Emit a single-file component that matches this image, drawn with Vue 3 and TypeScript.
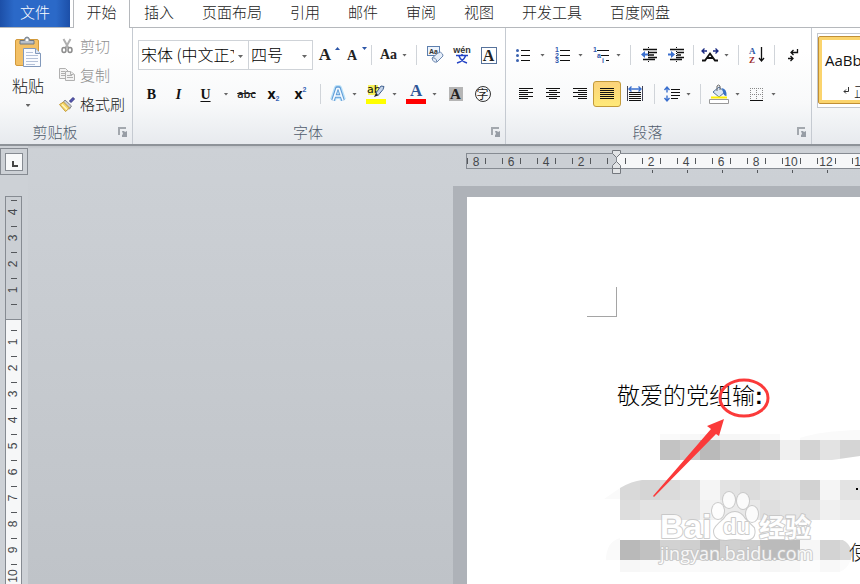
<script setup lang="ts">
import { ref } from 'vue'

const tabs = ['插入', '页面布局', '引用', '邮件', '审阅', '视图', '开发工具', '百度网盘']
const fontName = ref('宋体 (中文正文)')
const fontSize = ref('四号')

interface Mark { pos: number; label: string }

const hUnit = 35
const hOrigin = 150
const hMarks: Mark[] = []
for (let i = -4; i <= 12; i++) {
  if (i !== 0) hMarks.push({ pos: hOrigin + i * hUnit, label: String(Math.abs(i * 2)) })
}
const hTicks: number[] = []
for (let i = -9; i <= 24; i++) hTicks.push(Math.round(hOrigin + 8.75 + i * 17.5))

const vUnit = 26
const vOrigin = 120
const vMarks: Mark[] = []
for (let i = -4; i <= 16; i++) {
  if (i !== 0) vMarks.push({ pos: vOrigin + i * vUnit, label: String(Math.abs(i)) })
}
const vTicks: number[] = []
for (let i = -4; i <= 16; i++) vTicks.push(vOrigin + 14 + i * vUnit)

interface Tile { x: number; y: number; h: number; shade: string }
function row(x: number, y: number, h: number, shades: string): Tile[] {
  return shades.split(' ').map((s, i) => ({ x: x + i * 20, y, h, shade: `#${s}${s}${s}` }))
}
const tiles: Tile[] = [
  ...row(193, 237, 6, 'fa f8 f3 f6 f7 f9'),
  ...row(193, 243, 20, 'c3 cb ba c6 c6 cd f0 d3 e3 d5'),
  ...row(153, 283, 20, 'd9 d5 db e0 f5 e3 dc e3 e5 d2 f5 e3'),
  ...row(153, 303, 20, 'dd e3 e3 e3 f2 eb e8 df e5 e2 f0 eb'),
  ...row(153, 343, 20, 'b9 c1 d2 cf bc d0 cc bb ba f7 d3 da'),
  ...row(153, 363, 12, 'f7 f9 fa fa f9 f8 fa f6 f8 fc f8 fb'),
]
</script>

<template>
  <div class="app">
    <nav class="tabs">
      <button class="tab file">文件</button>
      <button class="tab active">开始</button>
      <button v-for="t in tabs" :key="t" class="tab">{{ t }}</button>
    </nav>

    <header class="ribbon">
      <section class="group clipboard">
        <div class="clip-body">
          <button class="paste">
            <svg width="28" height="32" viewBox="0 0 28 32">
              <rect x="1.5" y="3.5" width="23" height="26" rx="1.5" fill="#f3c065" stroke="#d29a3c" />
              <path d="M6 8V4.500h4.500Q10.500 1 13 1t2.500 3.500H20V8z" fill="#b9c0c9" stroke="#6f7883" />
              <circle cx="13" cy="4" r="1.3" fill="#fff" />
              <path d="M9.500 12.500h12l5 5v13h-17z" fill="#fafcff" stroke="#8299bb" />
              <path d="M21.500 12.500v5h5" fill="#dbe5f4" stroke="#8299bb" />
              <path d="M12 16.500h7M12 19.500h12M12 22.500h12M12 25.500h12M12 28.500h9" stroke="#b4c1d8" />
            </svg>
            <span>粘贴</span>
            <i class="caret" />
          </button>
          <div class="clip-list">
            <button class="clip-item off">
              <svg width="16" height="16" viewBox="0 0 16 16" fill="none">
                <path d="M4.500 1l5 9M11.500 1l-5 9" stroke="#b0b0b0" stroke-width="2" />
                <ellipse cx="5" cy="12" rx="2" ry="2.5" stroke="#8d8d8d" stroke-width="1.5" />
                <ellipse cx="11" cy="12" rx="2" ry="2.5" stroke="#8d8d8d" stroke-width="1.5" />
              </svg>剪切
            </button>
            <button class="clip-item off">
              <svg width="16" height="16" viewBox="0 0 16 16" fill="#f3f3f3" stroke="#b0b0b0">
                <path d="M.5 1.500h6l3 3v7h-9z" /><path d="M2 4.500h4M2 6.500h4M2 8.500h4" />
                <path d="M6.500 4.500h5l4 3v6h-9z" /><path d="M8 8.500h5M8 10.500h6M11.500 4.500v3h3" />
              </svg>复制
            </button>
            <button class="clip-item">
              <svg width="16" height="16" viewBox="0 0 16 16">
                <path d="M10.500 5L14 1.500l1.500 1.500L12 6.500z" fill="#5557b5" stroke="#34357f" />
                <path d="M6 4l6.500 6-2 3-7-6z" fill="#c9ccd2" stroke="#83878e" />
                <path d="M4.500 6l6 6-4 3.500L.5 8.500z" fill="#f5d766" stroke="#c39b3c" />
                <path d="M3 8.500l5 5" stroke="#fff6c4" stroke-width="1.5" />
              </svg>格式刷
            </button>
          </div>
        </div>
        <footer class="caption"><span>剪贴板</span>
          <button class="launch" aria-label="剪贴板"><svg width="10" height="10" viewBox="0 0 10 10"><path d="M1 8V1h7" fill="none" stroke="#a3a8ae" stroke-width="2" /><path d="M4 4h2l1 1 2-1v6H4V8l1-1z" fill="#979da5" /></svg></button>
        </footer>
      </section>

      <section class="group font">
        <div class="tools first">
          <div class="combo name">
            <select v-model="fontName" aria-label="字体"><option>宋体 (中文正文)</option></select><i class="caret" />
          </div>
          <div class="combo size">
            <select v-model="fontSize" aria-label="字号"><option>四号</option></select><i class="caret" />
          </div>
          <button class="tool serif grow">A<svg class="mark" width="5" height="3"><path d="M0 3L2.500 0 5 3z" fill="#2d56a8" /></svg></button>
          <button class="tool serif shrink">A<svg class="mark" width="5" height="3"><path d="M0 0h5L2.500 3z" fill="#2d56a8" /></svg></button>
          <i class="sep" />
          <button class="split serif aa"><span class="w16">Aa</span><i class="caret" /></button>
          <i class="sep" />
          <button class="tool" aria-label="清除格式">
            <svg width="18" height="18" viewBox="0 0 18 18">
              <rect x="1.5" y=".5" width="12" height="9" fill="#eef4fc" stroke="#5d7fae" />
              <text x="3" y="8" class="tiny">Aa</text>
              <path d="M6 12l6-5q3-2 4.500 1l.5 2-6 6q-4 1-5-4z" fill="#e6eef9" stroke="#6d88b0" />
              <path d="M6 12q4-1 5 4" fill="none" stroke="#6d88b0" />
            </svg>
          </button>
          <button class="tool" aria-label="拼音指南">
            <svg width="18" height="18" viewBox="0 0 18 18">
              <text x="9" y="7" class="wen">wén</text>
              <path d="M3 9.500h12M9 8v2M6 10q2 5 8 7M12.500 10q-2 5-8.500 7" fill="none" stroke="#2443c4" stroke-width="1.5" />
            </svg>
          </button>
          <button class="tool" aria-label="字符边框"><span class="boxed serif">A</span></button>
        </div>
        <div class="tools">
          <button class="tool serif b">B</button>
          <button class="tool serif it">I</button>
          <button class="tool serif un">U</button>
          <button class="drop" aria-label="下划线"><i class="caret" /></button>
          <button class="tool strike">abc</button>
          <button class="tool script">x<sub>2</sub></button>
          <button class="tool script">x<sup>2</sup></button>
          <i class="sep wide" />
          <button class="split" aria-label="文本效果">
            <svg width="16" height="18" viewBox="0 0 16 18" fill="none" stroke-linejoin="round">
              <path d="M3 15L7 3h2l4 12M5 11h6" stroke="#b9e0f8" stroke-width="6" />
              <path d="M3 15.500L7 3h2l4 12.500M5 11h6" stroke="#5f9bd6" stroke-width="3.600" />
              <path d="M3 15.500L7 3.500h2l4 12M5 11h6" stroke="#f4faff" stroke-width="1.600" />
            </svg><i class="caret" />
          </button>
          <button class="split" aria-label="突出显示">
            <svg width="20" height="20" viewBox="0 0 20 20">
              <rect x="2" y="1" width="10" height="10" fill="#f6f25c" />
              <text x="1" y="9" class="ab">ab</text>
              <path d="M10 9l5-7 3 .5-1 3-5 6z" fill="#c6d5ea" stroke="#41618f" /><path d="M8 13l2-4 2 2.500z" fill="#222" />
              <path d="M0 15h20v5H0z" fill="#ff0" />
            </svg><i class="caret" />
          </button>
          <button class="split" aria-label="字体颜色">
            <svg width="20" height="20" viewBox="0 0 20 20">
              <text x="4" y="12" class="color-letter">A</text><path d="M0 15h20v5H0z" fill="red" />
            </svg><i class="caret" />
          </button>
          <button class="tool" aria-label="字符底纹"><span class="shaded serif">A</span></button>
          <button class="tool" aria-label="带圈字符"><span class="circled">字</span></button>
        </div>
        <footer class="caption"><span>字体</span>
          <button class="launch" aria-label="字体设置"><svg width="10" height="10" viewBox="0 0 10 10"><path d="M1 8V1h7" fill="none" stroke="#a3a8ae" stroke-width="2" /><path d="M4 4h2l1 1 2-1v6H4V8l1-1z" fill="#979da5" /></svg></button>
        </footer>
      </section>

      <section class="group para">
        <div class="tools first">
          <button class="split" aria-label="项目符号">
            <svg width="18" height="16" viewBox="0 0 18 16"><path d="M5 3.500h9M5 8.500h9M5 13.500h9" stroke="#111" /><g fill="#3c63b0"><circle cx="1.5" cy="3.5" r="1.5" /><circle cx="1.5" cy="8.5" r="1.5" /><circle cx="1.5" cy="13.5" r="1.5" /></g></svg><i class="caret" />
          </button>
          <button class="split" aria-label="编号">
            <svg width="18" height="16" viewBox="0 0 18 16"><path d="M6 3.500h10M6 8.500h10M6 13.500h10" stroke="#111" /><g class="nums"><text x="1" y="5">1</text><text x="1" y="10.500">2</text><text x="1" y="16">3</text></g></svg><i class="caret" />
          </button>
          <button class="split" aria-label="多级列表">
            <svg width="18" height="16" viewBox="0 0 18 16"><path d="M5 3.500h12M9 8.500h8M14 13.500h3" stroke="#111" /><g class="nums"><text x="1" y="5">1</text><text x="5" y="10.500">a</text><text x="10" y="16">i</text></g></svg><i class="caret" />
          </button>
          <i class="sep" />
          <button class="tool" aria-label="减少缩进">
            <svg width="16" height="16" viewBox="0 0 16 16"><path d="M2 2.500h14M7 5.500h9M7 8h6M7 10.500h9M2 12.500h12" stroke="#111" stroke-width="1.400" /><path d="M7.500 0v16" stroke="#111" stroke-dasharray="1 1" /><path d="M0 7.500L4 4v2.500h3v2H4V11z" fill="#3a6fce" /></svg>
          </button>
          <button class="tool" aria-label="增加缩进">
            <svg width="16" height="16" viewBox="0 0 16 16"><path d="M2 2.500h14M9 5.500h7M9 8h4M8 10.500h8M2 12.500h12" stroke="#111" stroke-width="1.400" /><path d="M8.500 0v16" stroke="#111" stroke-dasharray="1 1" /><path d="M7 7.500L3 4v2.500H0v2h3V11z" fill="#3a6fce" /></svg>
          </button>
          <i class="sep" />
          <button class="split" aria-label="中文版式">
            <svg width="16" height="14" viewBox="0 0 16 14" fill="none"><path d="M0 12.500h3L8 5.500l5 7h3M4.500 10h7" stroke="#111" stroke-width="1.800" /><path d="M0 3h5M11 3h5M2.500.5L0 3l2.500 2.500M13.500.5L16 3l-2.500 2.500" stroke="#1b2a80" stroke-width="1.300" /></svg><i class="caret" />
          </button>
          <i class="sep" />
          <button class="tool" aria-label="排序">
            <svg width="16" height="18" viewBox="0 0 16 18"><text x="0" y="8" class="sort-a">A</text><text x="0" y="17" class="sort-z">Z</text><path d="M12.500 1v14M10 12l2.500 3 2.500-3" fill="none" stroke="#111" stroke-width="1.300" /></svg>
          </button>
          <i class="sep" />
          <button class="tool" aria-label="显示编辑标记">
            <svg width="12" height="14" viewBox="0 0 12 14" fill="none" stroke="#111" stroke-width="1.300"><path d="M10.500 1v3.500H4M6.500 2L4 4.500 6.500 7M1 10.500h5M3.500 8L6 10.500 3.500 13" /></svg>
          </button>
        </div>
        <div class="tools">
          <button class="tool" aria-label="左对齐"><svg width="14" height="14" viewBox="0 0 14 14"><path d="M0 1.500h14M0 3.500h9M0 5.500h14M0 7.500h9M0 9.500h14M0 11.500h9" stroke="#111" /></svg></button>
          <button class="tool" aria-label="居中"><svg width="14" height="14" viewBox="0 0 14 14"><path d="M0 1.500h14M3 3.500h8M0 5.500h14M3 7.500h8M0 9.500h14M3 11.500h8" stroke="#111" /></svg></button>
          <button class="tool" aria-label="右对齐"><svg width="14" height="14" viewBox="0 0 14 14"><path d="M0 1.500h14M5 3.500h9M0 5.500h14M5 7.500h9M0 9.500h14M5 11.500h9" stroke="#111" /></svg></button>
          <button class="tool on" aria-label="两端对齐"><svg width="14" height="14" viewBox="0 0 14 14"><path d="M0 1.500h14M0 3.500h14M0 5.500h14M0 7.500h14M0 9.500h14M0 11.500h14" stroke="#111" /></svg></button>
          <button class="tool" aria-label="分散对齐"><svg width="16" height="16" viewBox="0 0 16 16"><path d="M.5 0v15M15.500 0v15" stroke="#445" /><path d="M2 6.500h12M2 8.500h12M2 10.500h12M2 12.500h12M2 14.500h12" stroke="#111" /><path d="M3 3h10M4.500.5L2 3l2.500 2.500M11.500.5L14 3l-2.500 2.500" fill="none" stroke="#3a6fce" stroke-width="1.400" /></svg></button>
          <i class="sep wide" />
          <button class="split" aria-label="行距">
            <svg width="16" height="16" viewBox="0 0 16 16"><path d="M7 3.500h9M7 6.500h9M7 9.500h9M7 12.500h7" stroke="#111" /><path d="M3 1v5.500M3 9.500V15M.5 4L3 1l2.500 3M.5 12L3 15l2.500-3" fill="none" stroke="#3a6fce" stroke-width="1.400" /></svg><i class="caret" />
          </button>
          <i class="sep" />
          <button class="split" aria-label="底纹">
            <svg width="20" height="20" viewBox="0 0 20 20"><path d="M4 8l6-5 6 5-6 5z" fill="#dbe6f4" stroke="#52729f" /><path d="M8 7V2q1.500-2 3 0v4" fill="none" stroke="#666" /><path d="M13 4q5 1 4.500 8-3 0-3.500-4z" fill="#3970c4" /><path d="M2 13.500h16" stroke="#fff000" stroke-width="2" /><path d="M.5 15.500h19v4H.5z" fill="#fff" stroke="#999" /></svg><i class="caret" />
          </button>
          <button class="split" aria-label="边框">
            <svg width="16" height="15" viewBox="0 0 16 15"><path d="M1 1.500h13M1 7.500h13M1.500 1v12M7.500 1v12M13.500 1v12" stroke="#888" stroke-dasharray="1 1" /><path d="M1 13.500h13" stroke="#111" /></svg><i class="caret" />
          </button>
        </div>
        <footer class="caption"><span>段落</span>
          <button class="launch" aria-label="段落设置"><svg width="10" height="10" viewBox="0 0 10 10"><path d="M1 8V1h7" fill="none" stroke="#a3a8ae" stroke-width="2" /><path d="M4 4h2l1 1 2-1v6H4V8l1-1z" fill="#979da5" /></svg></button>
        </footer>
      </section>

      <section class="styles">
        <div class="gallery">
          <button class="style-card"><span class="sample">AaBb</span><span class="style-name"><svg width="6" height="8" viewBox="0 0 6 8" fill="none" stroke="#333"><path d="M5.500 0v4.500H1M3 2.500l-2 2 2 2" /></svg>正文</span></button>
        </div>
      </section>
    </header>

    <main class="workspace">
      <aside class="side">
        <button class="corner" aria-label="制表符"><span><svg width="6" height="6" viewBox="0 0 6 6"><path d="M1 0v5h5" fill="none" stroke="#444" stroke-width="2" /></svg></span></button>
        <svg class="vruler" width="17" height="1200">
          <rect x=".5" y=".5" width="16" height="1240" fill="#f6f7f8" stroke="#868b92" />
          <rect x=".5" y=".5" width="16" height="123" fill="#cbcfd4" stroke="#868b92" />
          <path v-for="t in vTicks" :key="t" :d="`M6 ${t - 26}.5h6`" stroke="#55585c" />
          <text v-for="m in vMarks" :key="m.pos" :transform="`translate(12 ${m.pos}) rotate(-90)`" class="rnum">{{ m.label }}</text>
        </svg>
      </aside>
      <div class="canvas">
        <div class="hruler">
          <svg width="1200" height="24">
            <rect x=".5" y="3.5" width="1240" height="15" fill="#f6f7f8" stroke="#868b92" />
            <rect x=".5" y="3.5" width="150" height="15" fill="#cbcfd4" stroke="#868b92" />
            <path v-for="t in hTicks" :key="t" :d="`M${t}.5 8v6`" stroke="#55585c" />
            <text v-for="m in hMarks" :key="m.pos" :x="m.pos" y="16" class="rnum">{{ m.label }}</text>
            <path v-for="m in hMarks.slice(4)" :key="'s' + m.pos" :d="`M${m.pos + 1}.5 20v3`" stroke="#55585c" />
            <g fill="#e2e4e6" stroke="#74787e">
              <path d="M146.500.5h8v3l-4 4-4-4z" /><path d="M150.500 11.500l4 4v3h-8v-3z" /><path d="M146.500 18.500h8v5h-8z" />
            </g>
          </svg>
        </div>
        <div class="page">
          <i class="crop" />
          <p class="line">敬爱的党组输<b>:</b></p>
          <svg class="ink" width="393" height="387" viewBox="0 0 393 387">
            <defs><clipPath id="smudge"><path d="M193 236h120v7h80v16l-28 4H193zM153 291q12-7 22-8h218v40H153zM153 341h217q14 3 15 17-3 16-17 18H153z" /></clipPath></defs>
            <path d="M333 241q20-7 60-8v10h-60zM137 302l16-11v11zM139 363q0-18 14-22v22z" fill="#fafafa" />
            <g clip-path="url(#smudge)" shape-rendering="crispEdges">
              <rect v-for="(t, i) in tiles" :key="i" :x="t.x" :y="t.y" width="20" :height="t.h" :fill="t.shade" />
            </g>
            <path d="M389 291h2v2h-2z" />
            <text x="382" y="363" class="body">使</text>
            <g class="wm">
              <text x="193" y="341" class="bai">Bai</text>
              <g><ellipse cx="251" cy="314" rx="6" ry="8" /><ellipse cx="262" cy="303" rx="6" ry="8" /><ellipse cx="276" cy="304" rx="6" ry="8" /><ellipse cx="285" cy="317" rx="6" ry="8" />
                <path d="M268 315q6 0 10 7l9 9q3 12-10 12-9-2-18 0-12 0-12-9 0-4 10-12 4-7 11-7z" /></g>
              <text x="256" y="337" class="du">du</text>
              <text x="292" y="340" class="jy">经验</text>
              <text x="193" y="363" class="url">jingyan.baidu.com</text>
            </g>
            <g class="callout">
              <ellipse cx="277" cy="201" rx="24" ry="18" />
              <path d="M257 222l-5 17-3-2-62 63-1-1 58-67-4-3z" />
            </g>
          </svg>
        </div>
      </div>
    </main>
  </div>
</template>

<style>
body { overflow: hidden; }
</style>

<style scoped>
.app { height: 100vh; display: flex; flex-direction: column; overflow: hidden; background: #fff; color: #222; font: 300 15px/20px "Noto Sans CJK SC", sans-serif; }
button { font: inherit; color: inherit; background: none; border: 0; padding: 0; margin: 0; white-space: nowrap; }
svg { display: block; flex: none; overflow: visible; }
.tabs { display: flex; height: 28px; flex: none; border-bottom: 1px solid #b5b8bc; box-sizing: border-box; }
.tab { padding: 0 14px 4px; color: #222; }
.tab.file { width: 70px; color: #fff; background: linear-gradient(90deg, #1c4fa8, #2b69c8 20%, #2b69c8 80%, #1c4fa8); margin-right: 3px; }
.tab.active { width: 57px; padding: 0 0 4px; background: #fff; border: 1px solid #b5b8bc; border-width: 0 1px; height: 28px; }
.ribbon { display: flex; flex: none; background: linear-gradient(#fff 20%, #f8f9fa 65%, #e7eaee); border-bottom: 2px solid #8e9399; }
.group { display: flex; flex-direction: column; box-sizing: border-box; flex: none; border-right: 1px solid #c5cad1; }
.clipboard { width: 133px; }
.font { width: 373px; }
.para { width: 306px; }
.clip-body { display: flex; height: 92px; }
.paste { width: 56px; display: flex; flex-direction: column; align-items: center; padding-top: 8px; font-size: 16px; box-sizing: border-box; }
.paste span { margin: 7px 0 9px; }
.clip-list { padding: 3px 0 0 3px; }
.clip-item { display: flex; align-items: center; gap: 5px; height: 29px; }
.off { color: #909090; }
.caption { display: flex; height: 24px; align-items: center; color: #505c6c; }
.caption span { flex: 1; text-align: center; }
.launch { width: 22px; padding-left: 8px; }
.tools { display: flex; height: 28px; align-items: center; padding-left: 5px; margin-bottom: 12px; }
.tools.first { height: 30px; margin: 12px 0 10px; }
.para .tools { padding-left: 6px; }
.tool { width: 27px; height: 28px; display: flex; align-items: center; justify-content: center; position: relative; flex: none; }
.tool.on { width: 28px; height: 26px; box-sizing: border-box; border: 1px solid #c29a3b; border-radius: 3px; background: linear-gradient(#fbd27a, #ffe978); }
.split { display: flex; height: 28px; align-items: center; gap: 6px; padding: 0 5px 0 4px; flex: none; }
.drop { width: 14px; display: flex; justify-content: center; }
.caret { width: 5px; height: 3px; background: #666; clip-path: polygon(0 0, 100% 0, 50% 100%); flex: none; }
.sep { width: 9px; height: 20px; background: linear-gradient(#d0d4d9, #d0d4d9) center / 1px 100% no-repeat; flex: none; }
.sep.wide { width: 12px; }
.combo { position: relative; height: 30px; box-sizing: border-box; border: 1px solid #cfd3d8; background: #fff; flex: none; }
.combo.name { width: 111px; }
.combo.size { width: 65px; margin-left: -1px; }
.combo select { width: 100%; height: 28px; appearance: none; border: 0; background: none; padding: 0 14px 2px 2px; font: inherit; font-size: 16px; color: #000; }
.combo .caret { position: absolute; right: 5px; top: 14px; }
.serif { font-family: "Liberation Serif", serif; font-weight: 700; color: #222; }
.grow { font-size: 17px; padding-right: 3px; box-sizing: border-box; }
.shrink { font-size: 14px; padding: 2px 3px 0 0; box-sizing: border-box; }
.mark { position: absolute; right: 0; top: 6px; }
.aa { font-size: 14px; }
.w16 { width: 16px; }
.boxed { width: 14px; height: 15px; line-height: 16px; border: 1px solid #57739c; font-size: 16px; text-align: center; }
.shaded { width: 14px; height: 14px; line-height: 15px; background: #b5b5b5; font-size: 15px; text-align: center; }
.circled { width: 14px; height: 14px; line-height: 13px; border: 1px solid #333; border-radius: 50%; font-size: 12px; font-weight: 400; text-align: center; }
.b, .it, .un { font-size: 14px; color: #111; padding-top: 2px; box-sizing: border-box; }
.it { font-style: italic; }
.un { text-decoration: underline; text-underline-offset: 2px; }
.strike { font: 600 11px/20px "Open Sans", sans-serif; text-decoration: line-through; }
.script { font: 700 14px/16px "Open Sans", sans-serif; color: #111; }
.script sub, .script sup { font: 700 7px/8px "Liberation Sans", sans-serif; color: #3563b5; }
.script sub { align-self: flex-end; margin-bottom: 5px; }
.script sup { align-self: flex-start; margin-top: 6px; }
.tiny { font: 700 7px "Liberation Sans", sans-serif; fill: #333; }
.wen { font: 700 9px "Liberation Sans", sans-serif; fill: #333; text-anchor: middle; }
.ab { font: 11px "DejaVu Sans", sans-serif; fill: #111; }
.color-letter { font: 700 17px "Liberation Serif", serif; fill: #2f5597; }
.nums { font: 700 7px "Liberation Sans", sans-serif; fill: #3158ad; }
.sort-a { font: 700 9px "Liberation Serif", serif; fill: #2f5ba8; }
.sort-z { font: 700 9px "Liberation Serif", serif; fill: #9c2b2b; }
.styles { flex: 1; min-width: 0; overflow: hidden; padding: 5px 0 0 5px; }
.gallery { border: 1px solid #c4c8ce; background: #fff; width: 400px; height: 73px; }
.style-card { width: 76px; height: 68px; margin: 2px 0 0; box-sizing: border-box; border: 1px solid #c08f35; border-radius: 2px; box-shadow: inset 0 0 0 3px #fbd46d; display: flex; flex-direction: column; align-items: flex-start; padding: 13px 0 0 6px; gap: 11px; }
.sample { font: 15px/20px "Open Sans", sans-serif; color: #111; }
.style-name { display: flex; align-items: center; gap: 5px; padding-left: 18px; font-size: 14px; }
.workspace { flex: 1; min-height: 0; display: flex; overflow: hidden; background: linear-gradient(#bfc3c8, #cdd1d6 3px, #bfc3c8); }
.side { width: 28px; flex: none; background: #cdd1d6; overflow: hidden; }
.corner { display: block; width: 28px; height: 27px; margin: 2px 0 21px; border: 1px solid #868b92; padding: 3px 4px; box-sizing: border-box; }
.corner span { display: flex; width: 18px; height: 18px; box-sizing: border-box; border: 1px solid #868b92; background: #f8f9fa; align-items: flex-end; justify-content: flex-end; padding: 0 4px 3px 0; }
.vruler { margin-left: 5px; }
.rnum { font: 12px "Liberation Sans", sans-serif; fill: #44474b; text-anchor: middle; }
.canvas { flex: 1; min-width: 0; overflow: hidden; display: flex; flex-direction: column; }
.hruler { margin: 4px 0 12px 438px; }
.page { flex: 1; position: relative; margin-left: 425px; border: solid #aeb2b8; border-width: 11px 0 0 14px; background: #fff; overflow: hidden; padding: 90px 0 0 120px; }
.crop { display: block; width: 29px; height: 29px; border: solid #a5a5a5; border-width: 0 1px 1px 0; }
.line { margin: 61px 0 0 30px; font-size: 23px; line-height: 32px; color: #000; }
.line b { font: 700 23px/32px "Liberation Sans", sans-serif; }
.ink { position: absolute; left: 0; top: 0; }
.body { font-size: 20px; fill: #111; }
.wm { fill: #fff; stroke: #c4c4c4; stroke-width: 2px; paint-order: stroke; stroke-linejoin: round; opacity: .85; }
.bai { font: 700 33px "Liberation Sans", sans-serif; }
.du { font: 700 22px "Liberation Sans", sans-serif; }
.jy { font: 700 26px "Noto Sans CJK SC", sans-serif; }
.url { font: 18px "Open Sans", sans-serif; }
.callout ellipse { fill: none; stroke: #fb3a3a; stroke-width: 3px; }
.callout path { fill: #fb3a3a; }
</style>
